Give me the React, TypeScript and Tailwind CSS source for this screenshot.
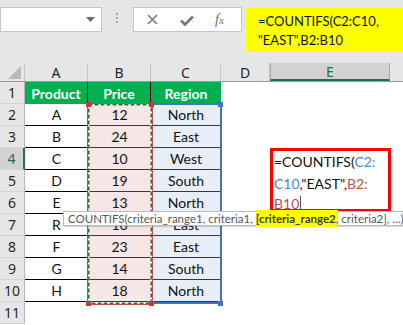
import React from 'react';

const rows: [string, string, string][] = [
  ['A', '12', 'North'],
  ['B', '24', 'East'],
  ['C', '10', 'West'],
  ['D', '19', 'South'],
  ['E', '13', 'North'],
  ['R', '16', 'East'],
  ['F', '23', 'East'],
  ['G', '14', 'South'],
  ['H', '18', 'North'],
];

const cols = [
  { key: 'A', w: 'w-[63px]' },
  { key: 'B', w: 'w-[63px]' },
  { key: 'C', w: 'w-[70px]' },
  { key: 'D', w: 'w-[49px]' },
  { key: 'E', w: 'w-[120px]' },
];

function RowHead({ n, active }: { n: number; active?: boolean }) {
  return (
    <div
      className={
        'w-[25px] shrink-0 h-full flex items-center justify-center text-[14px] border-b border-[#d4d4d4] ' +
        (active
          ? 'bg-[#d2d2d2] text-[#217346] border-r-2 border-r-[#217346]'
          : 'bg-[#e6e6e6] text-[#262626] border-r border-r-[#b5b5b5]')
      }
      style={{ fontFamily: '"Noto Sans", sans-serif' }}
    >
      {n}
    </div>
  );
}

export default function App() {
  return (
    <div
      className="relative w-[403px] h-[325px] overflow-hidden bg-white"
      style={{ fontFamily: 'Lato, "Liberation Sans", sans-serif' }}
    >
      {/* formula bar */}
      <div className="h-[63px] bg-[#e6e6e6] flex items-start">
        <div className="mt-[7px] w-[102px] h-[25px] bg-white border border-[#c6c6c6] flex items-center justify-end pr-[6px]">
          <svg width="9" height="5" viewBox="0 0 9 5">
            <path d="M0 0 L9 0 L4.5 5 Z" fill="#6a6a6a" />
          </svg>
        </div>
        <div className="mt-[13px] ml-[13px] w-[4px] flex flex-col items-center gap-[2px]">
          <div className="w-[2px] h-[2px] bg-[#a8a8a8]" />
          <div className="w-[2px] h-[2px] bg-[#a8a8a8]" />
          <div className="w-[2px] h-[2px] bg-[#a8a8a8]" />
        </div>
        <div className="mt-[7px] ml-[14px] w-[109px] h-[25px] bg-white border border-[#c6c6c6] flex items-center">
          <svg width="11" height="11" viewBox="0 0 11 11" className="ml-[13px]">
            <path d="M1 1 L10 10 M10 1 L1 10" stroke="#7a7a7a" strokeWidth="1.6" />
          </svg>
          <svg width="14" height="11" viewBox="0 0 14 11" className="ml-[22px] mt-[2px]">
            <path d="M1 5.5 L5 9.5 L13 1.5" stroke="#7a7a7a" strokeWidth="2.8" fill="none" />
          </svg>
          <span
            className="ml-[21px] text-[14px] italic text-[#6a6a6a] leading-none"
            style={{ fontFamily: '"Liberation Serif", serif' }}
          >
            f<span className="text-[11px]">x</span>
          </span>
        </div>
        <div className="mt-[8px] ml-[4px] flex-1 h-[44px] bg-[#ffff00] pl-[12px] pt-[4px] text-[13px] leading-[19px] text-[#111]">
          <div>=COUNTIFS(C2:C10,</div>
          <div>"EAST",B2:B10</div>
        </div>
      </div>

      {/* column headers */}
      <div className="flex h-[19px] bg-[#e6e6e6] border-b border-[#9b9b9b]" style={{ fontFamily: '"Noto Sans", sans-serif' }}>
        <div className="w-[25px] shrink-0 flex items-end justify-end pr-[3px] pb-[2px] border-r border-[#c6c6c6]">
          <svg width="13" height="13" viewBox="0 0 13 13">
            <path d="M13 0 L13 13 L0 13 Z" fill="#b9b9b9" />
          </svg>
        </div>
        {cols.map((c) => (
          <div
            key={c.key}
            className={
              c.w +
              ' shrink-0 flex items-center justify-center text-[14px] ' +
              (c.key === 'E'
                ? 'bg-[#d2d2d2] text-[#217346] border-b-2 border-[#217346] border-x border-x-[#ababab]'
                : 'text-[#262626] border-r border-[#c6c6c6]')
            }
          >
            {c.key}
          </div>
        ))}
        <div className="flex-1" />
      </div>

      {/* row 1 */}
      <div className="flex h-[22px]">
        <RowHead n={1} />
        <div className="w-[63px] bg-[#00b050] text-white font-bold text-[14px] flex items-center justify-center border-r border-black">Product</div>
        <div className="w-[63px] bg-[#00b050] text-white font-bold text-[14px] flex items-center justify-center border-r border-black">Price</div>
        <div className="w-[70px] bg-[#00b050] text-white font-bold text-[14px] flex items-center justify-center">Region</div>
        <div className="flex-1" />
      </div>

      {/* data rows */}
      {rows.map((r, i) => (
        <div key={i} className="flex h-[22px]">
          <RowHead n={i + 2} active={i + 2 === 4} />
          <div className="w-[63px] text-[14px] text-[#111] flex items-center justify-center border-b border-black">{r[0]}</div>
          <div className="w-[63px] text-[14px] text-[#111] bg-[#f7e6e6] flex items-center justify-center border-b border-[#3a3a3a]">{r[1]}</div>
          <div className="w-[70px] text-[14px] text-[#111] bg-[#e8eef8] flex items-center justify-center border-b border-[#3a3a3a]">{r[2]}</div>
          <div className="flex-1" />
        </div>
      ))}
      <div className="flex h-[22px]">
        <RowHead n={11} />
        <div className="flex-1" />
      </div>

      {/* reference highlight: C2:C10 */}
      <div className="absolute left-[150px] top-[103px] w-[72px] h-[201px] border-2 border-[#4472c4] border-l-0 pointer-events-none" />
      {/* reference highlight: B2:B10 + copy marquee */}
      <svg className="absolute left-[86px] top-[102px] pointer-events-none" width="68" height="204" viewBox="0 0 68 204">
        <rect x="2.5" y="2.5" width="63" height="199" fill="none" stroke="#ffffff" strokeWidth="2" />
        <rect x="2.5" y="2.5" width="63" height="199" fill="none" stroke="#217346" strokeWidth="2" strokeDasharray="4 2" />
        <rect x="1.5" y="1.5" width="65" height="201" fill="none" stroke="#c0504d" strokeWidth="1" />
      </svg>
      {/* handles */}
      <div className="absolute left-[86px] top-[102px] w-[5px] h-[5px] bg-[#c0393b]" />
      <div className="absolute left-[149px] top-[102px] w-[5px] h-[5px] bg-[#c0393b]" />
      <div className="absolute left-[86px] top-[301px] w-[5px] h-[5px] bg-[#c0393b]" />
      <div className="absolute left-[149px] top-[301px] w-[5px] h-[5px] bg-[#c0393b]" />
      <div className="absolute left-[218px] top-[102px] w-[5px] h-[5px] bg-[#4472c4]" />
      <div className="absolute left-[218px] top-[301px] w-[5px] h-[5px] bg-[#4472c4]" />

      {/* in-cell editor */}
      <div className="absolute left-[270px] top-[148px] w-[121px] h-[64px] border-[3px] border-[#ff0000] bg-white text-[14px] leading-[22px] text-[#111] pl-[1px]">
        <div>
          =COUNTIFS(<span className="text-[#4a86d4]">C2:</span>
        </div>
        <div>
          <span className="text-[#4a86d4]">C10</span>,"EAST",<span className="text-[#c0504d]">B2:</span>
        </div>
        <div className="flex items-center h-[18px]">
          <span className="text-[#c0504d]">B10</span>
          <span className="inline-block w-px h-[17px] bg-[#555] ml-px" />
        </div>
      </div>

      {/* function tooltip */}
      <div className="absolute left-[63px] top-[211px] h-[15px] pr-2 bg-white border border-[#bcbcbc] flex items-center whitespace-nowrap text-[11.5px] text-[#575757] pl-[4px] shadow-[1px_1px_1px_rgba(0,0,0,0.15)]">
        <span>COUNTIFS(criteria_range1, criteria1,&nbsp;</span>
        <span className="bg-[#ffff00] font-bold text-[#3a3a3a]">[criteria_range2</span>
        <span className="bg-[#ffff00]">,</span>
        <span>&nbsp;criteria2], ...)</span>
      </div>
    </div>
  );
}
